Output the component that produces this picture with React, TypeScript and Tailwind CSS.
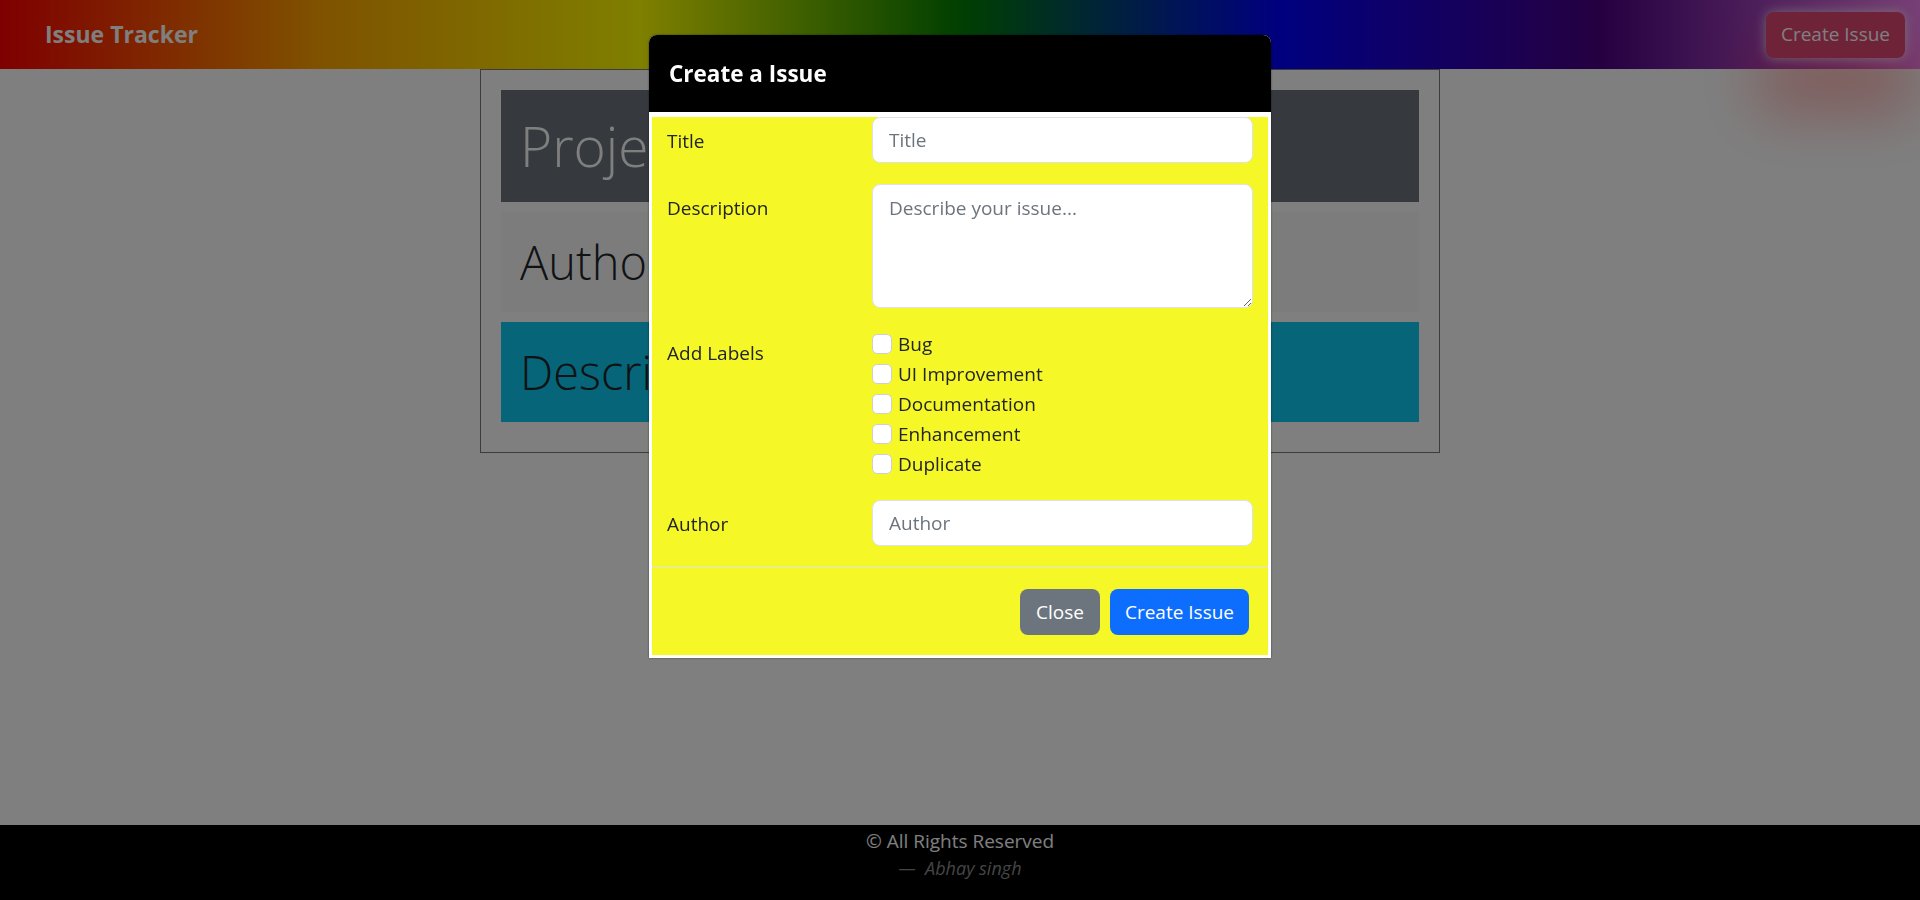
const labels = ["Bug", "UI Improvement", "Documentation", "Enhancement", "Duplicate"];

const IssueDetails = () => {
  return (
    <div className="w-[960px] mx-auto border border-[#787878] p-5">
      <div className="h-[112px] mb-[10px] bg-[#6c757d] pl-[19px] flex items-center">
        <h1 className="text-[55px] font-light text-white leading-[1.2]">Project Name</h1>
      </div>
      <div className="h-[100px] mb-[10px] bg-[#f8f9fa] pl-[19px] flex items-center">
        <h2 className="text-[47px] font-light text-[#212529] leading-[1.2]">Author</h2>
      </div>
      <div className="h-[100px] mb-[10px] bg-[#0dcaf0] pl-[19px] flex items-center">
        <h2 className="text-[47px] font-light text-[#212529] leading-[1.2]">Description</h2>
      </div>
    </div>
  );
};

const CreateIssueModal = () => {
  return (
    <div className="fixed top-[35px] left-[649px] w-[622px] bg-white rounded-t-lg shadow-[0_0_2px_rgba(0,0,0,0.6)]">
      <div className="h-[77px] bg-black rounded-t-lg px-5 flex items-center">
        <h5 className="text-white text-[22.5px] font-bold">Create a Issue</h5>
      </div>
      <div className="mt-[5px] mx-[3px] mb-[3px] bg-[#f6f726] text-[#212529] text-[19px]">
        <form className="px-[15px] pb-[21px]">
          <div className="grid grid-cols-[205px_1fr] mb-[21px]">
            <label className="pt-[9px] leading-[30px]">Title</label>
            <input
              placeholder="Title"
              className="h-[46px] bg-white border border-[#dee2e6] rounded-lg px-4 placeholder:text-[#6c757d] outline-none"
            />
          </div>
          <div className="grid grid-cols-[205px_1fr] mb-[21px]">
            <label className="pt-[9px] leading-[30px]">Description</label>
            <textarea
              placeholder="Describe your issue..."
              className="h-[124px] bg-white border border-[#dee2e6] rounded-lg px-4 py-2 leading-[30px] placeholder:text-[#6c757d] outline-none resize-y"
            />
          </div>
          <div className="grid grid-cols-[205px_1fr] mb-[21px]">
            <label className="pt-[9px] leading-[30px]">Add Labels</label>
            <div>
              {labels.map((l) => (
                <label key={l} className="h-[30px] flex items-center gap-[6px]">
                  <input
                    type="checkbox"
                    className="appearance-none w-5 h-5 bg-white border border-[#cfcfcf] rounded-[5px]"
                  />
                  <span className="leading-[30px]">{l}</span>
                </label>
              ))}
            </div>
          </div>
          <div className="grid grid-cols-[205px_1fr]">
            <label className="pt-[9px] leading-[30px]">Author</label>
            <input
              placeholder="Author"
              className="h-[46px] bg-white border border-[#dee2e6] rounded-lg px-4 placeholder:text-[#6c757d] outline-none"
            />
          </div>
        </form>
        <div className="border-t border-[#dee2e6] pt-[21px] pb-[20px] pr-[19px] flex justify-end gap-[10px]">
          <button className="h-[46px] w-[80px] rounded-lg bg-[#6c757d] text-white">Close</button>
          <button className="h-[46px] w-[139px] rounded-lg bg-[#0d6efd] text-white">Create Issue</button>
        </div>
      </div>
    </div>
  );
};

export default function App() {
  return (
    <div className="font-['Open_Sans',sans-serif]">
      <div className="min-h-screen flex flex-col bg-white">
        <nav className="h-[69px] flex items-center justify-between pl-[45px] pr-[15px] bg-[linear-gradient(to_right,red,orange,yellow,green,blue,indigo,violet)]">
          <span className="text-white text-[23px] font-bold">Issue Tracker</span>
          <button className="h-[46px] w-[139px] rounded-lg bg-[#de4672] text-white text-[19px] shadow-[0_0_12px_rgba(255,255,255,0.75),0_45px_60px_10px_rgba(255,0,0,0.3)]">
            Create Issue
          </button>
        </nav>
        <main className="flex-1">
          <IssueDetails />
        </main>
        <footer className="h-[75px] bg-black text-center pt-[1px]">
          <p className="text-white text-[19px] leading-[30px]">© All Rights Reserved</p>
          <p className="text-[#8a8a8a] text-[18px] italic leading-[24px]">—&nbsp; Abhay singh</p>
        </footer>
      </div>
      <div className="fixed inset-0 bg-black/50" />
      <CreateIssueModal />
    </div>
  );
}
